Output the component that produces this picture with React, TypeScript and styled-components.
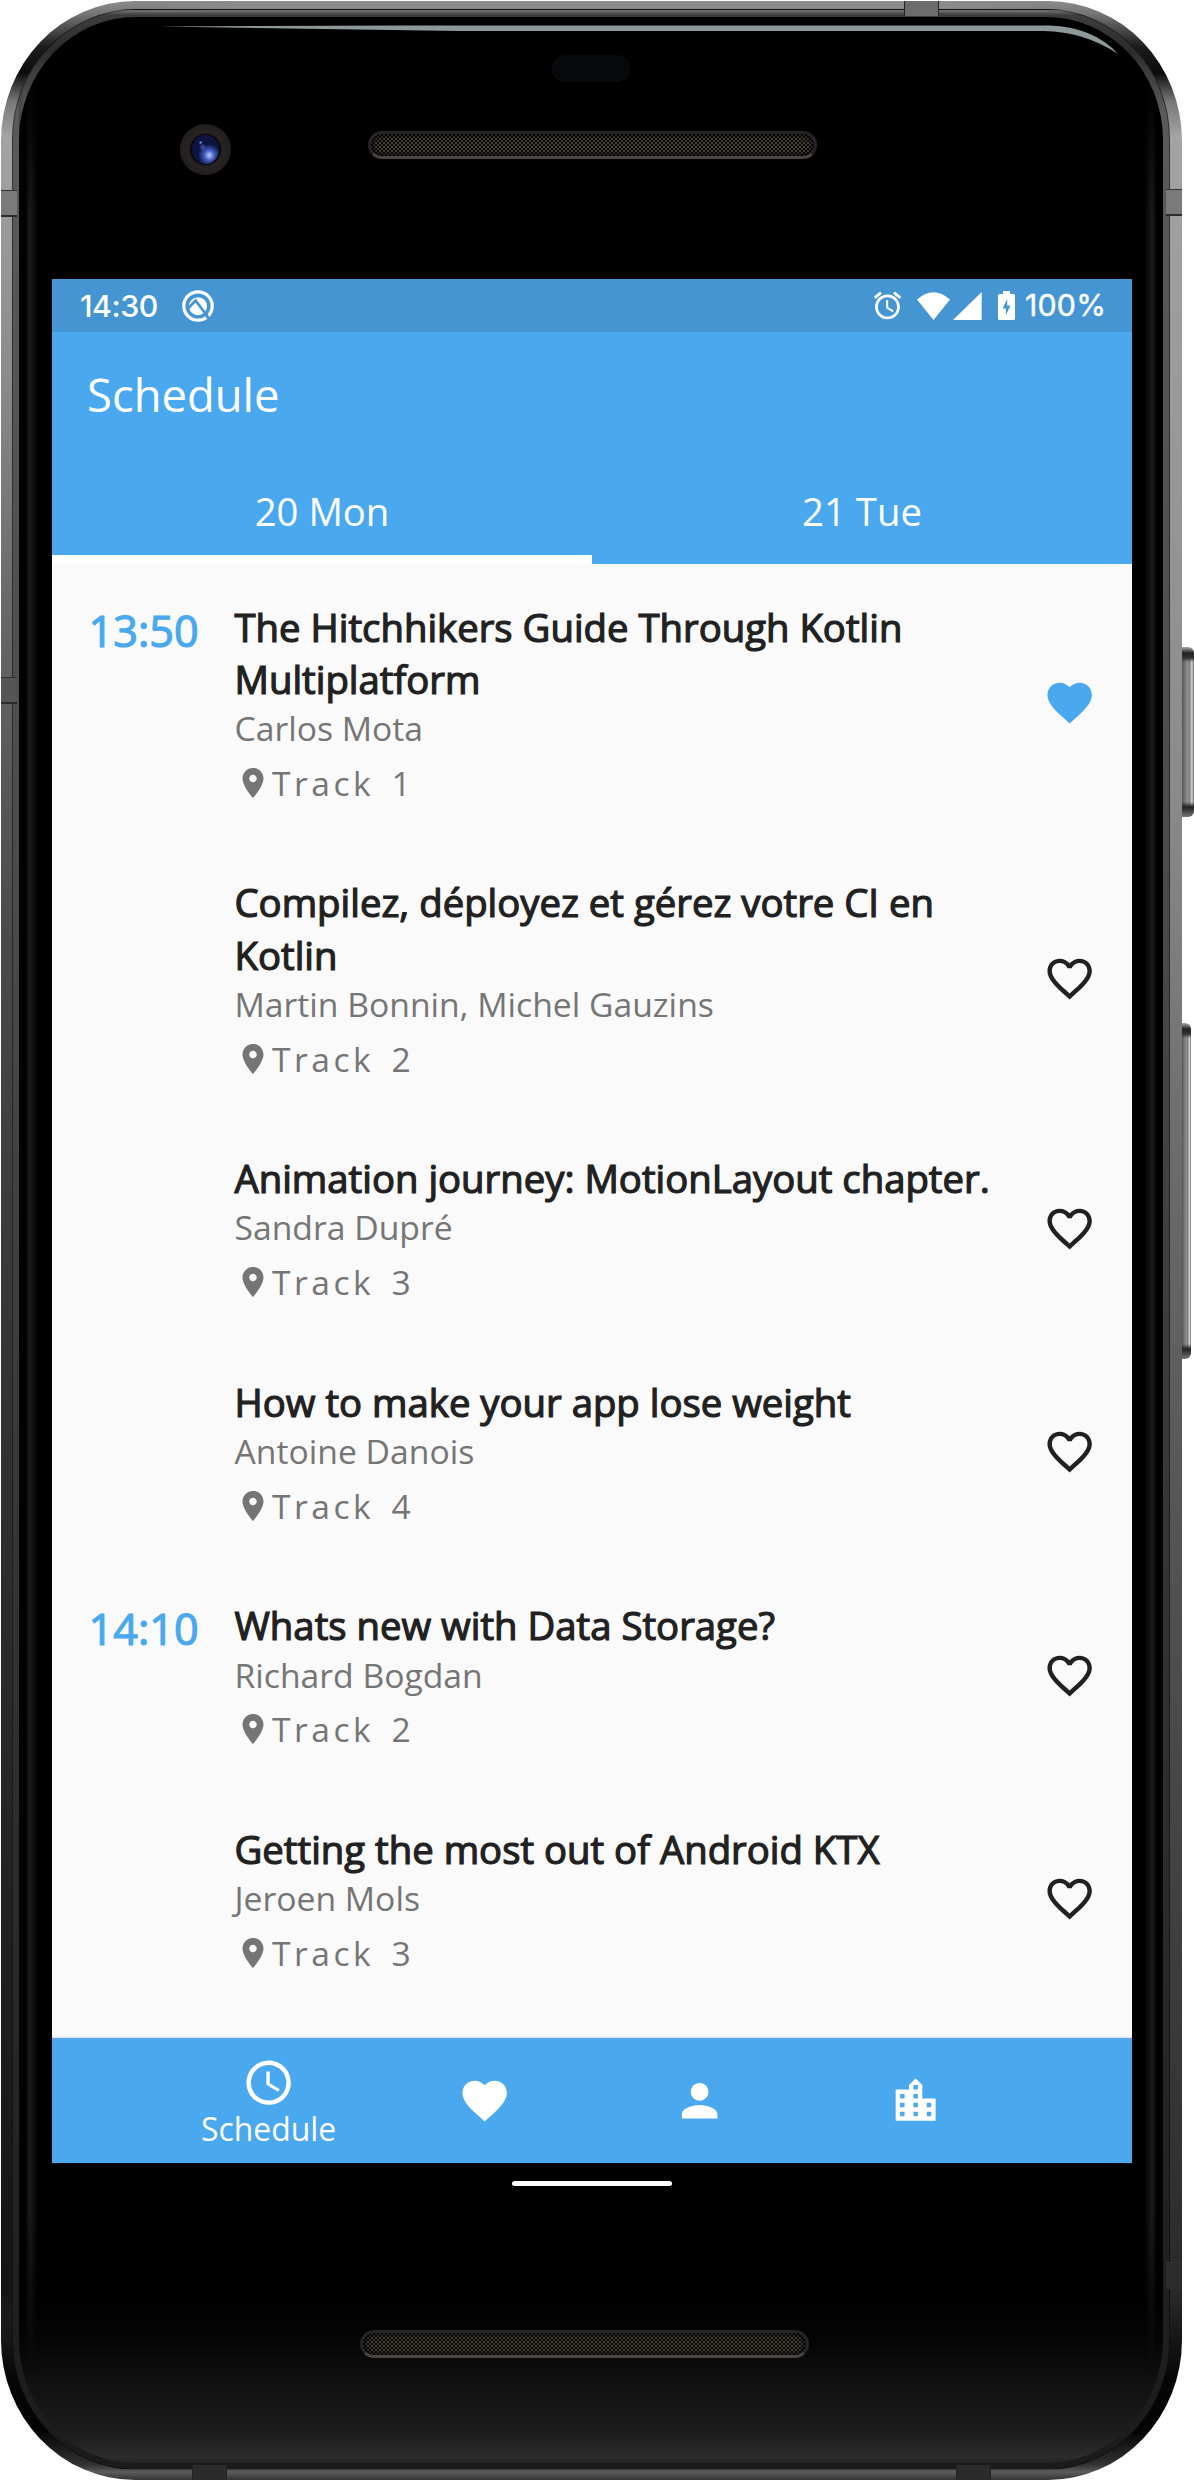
import React from 'react';
import styled, { createGlobalStyle, css } from 'styled-components';

const BLUE = '#49a8ee';
const BLUE_DARK = '#4495d2';
const INK = '#212121';
const MUTED = '#757575';

const GlobalStyle = createGlobalStyle`
  *, *::before, *::after { box-sizing: border-box; }
  body {
    margin: 0;
    background: #fff;
    font-family: "Open Sans", "Noto Sans", sans-serif;
  }
  svg { display: block; flex: none; }
`;

/* ---------- device ---------- */

const Device = styled.div`
  position: relative;
  display: flex;
  width: 1194px;
  height: 2480px;
  padding-left: 1px;
  overflow: hidden;
`;

const Shell = styled.div`
  position: relative;
  width: 1181px;
  height: 2479px;
  margin-top: 1px;
  padding: 8px 12px 10px 11px;
  border-radius: 134px / 140px;
  background:
    linear-gradient(to right, transparent 140px, #8b8b8b 230px, #8b8b8b 950px, transparent 1060px) top / 100% 16px no-repeat,
    linear-gradient(#a3a3a3, #8a8a8a 240px, #666 480px, #4a4a4a 800px, #353535 1200px, #1f1f1f 1840px, #141414 2150px, transparent) 0 140px / 13px 2200px no-repeat,
    linear-gradient(
      #8b8b8b 0,
      #777 12px,
      #1c1c1c 46px,
      #0c0c0c 72px,
      #777 100px,
      #a3a3a3 135px,
      #999 420px,
      #8a8a8a 800px,
      #6c6c6c 1150px,
      #565656 1500px,
      #3c3c3c 1980px,
      #2a2a2a 2290px,
      #050505 2380px,
      #040404 2430px,
      #333 2464px,
      #5c5c5c 2471px,
      #333 2479px
    );
`;

const InnerRim = styled.div`
  height: 100%;
  padding: 7px 6px 6px;
  border-radius: 124px / 130px;
  border: 1px solid rgba(0, 0, 0, 0.45);
  background: linear-gradient(
    #777 0,
    #3d3d3d 5px,
    #2c2c2c 40px,
    #5a5a5a 100px,
    #4a4a4a 900px,
    #333 1600px,
    #222 2200px,
    #1b1b1b 100%
  );
`;

const Glass = styled.div`
  position: relative;
  display: flex;
  flex-direction: column;
  height: 100%;
  padding: 0 33px;
  border-radius: 117px / 123px;
  background: linear-gradient(#000 2270px, #050505 2325px, #121212 2370px, #1c1c1c 2415px, #2c2c2c 2440px, #242424 100%);

  &::before {
    content: '';
    position: absolute;
    inset: 60px 0 90px;
    background: linear-gradient(
      to right,
      #050505,
      transparent 6px,
      #1b1b1b 11px,
      transparent 19px,
      transparent calc(100% - 19px),
      #1b1b1b calc(100% - 11px),
      transparent calc(100% - 6px)
    );
    mask-image: linear-gradient(transparent, #000 140px, #000 calc(100% - 160px), transparent);
  }
`;

const Glare = styled.svg`
  position: absolute;
  left: 158px;
  top: 23px;
`;

const Seam = styled.span<{ $edge: 'left' | 'right' | 'top' | 'bottom'; $at: number; $tone: string }>`
  position: absolute;
  background: ${(p) => p.$tone};
  ${(p) =>
    p.$edge === 'left' || p.$edge === 'right'
      ? css`
          ${p.$edge}: 0;
          top: ${p.$at}px;
          width: 16px;
          height: 27px;
          border-top: 1px solid #333;
          border-bottom: 2px solid #2c2c2c;
        `
      : css`
          ${p.$edge}: 0;
          left: ${p.$at}px;
          width: 35px;
          height: 15px;
          border-left: 1px solid #222;
          border-right: 1px solid #222;
        `}
`;

const SideKeys = styled.div`
  width: 12px;
  padding-top: 647px;
`;

const SideKey = styled.div<{ $height: number; $width: number; $gap?: number }>`
  width: ${(p) => p.$width}px;
  height: ${(p) => p.$height}px;
  margin-top: ${(p) => p.$gap ?? 0}px;
  border-radius: 0 6px 6px 0;
  background:
    linear-gradient(#aaa 0, #222 6px, #333 11px, transparent 15px, transparent calc(100% - 15px), #222 calc(100% - 10px), #777 100%),
    linear-gradient(to right, #555, #8e8e8e 45%, #808080 65%, #d8d8d8 82%, #6a6a6a);
`;

const Forehead = styled.div`
  flex: none;
  height: 262px;
  padding-top: 38px;
`;

const Sensor = styled.div`
  width: 78px;
  height: 27px;
  margin: 0 0 0 500px;
  border-radius: 13px;
  background: #08090d;
`;

const FrontRow = styled.div`
  display: flex;
  align-items: flex-start;
  padding: 42px 0 0 128px;
`;

const Camera = styled.div`
  display: grid;
  place-items: center;
  width: 51px;
  height: 51px;
  border-radius: 50%;
  background: radial-gradient(circle closest-side, #0b0909 58%, #282424 66%, #221e1e 100%);
`;

const Lens = styled.div`
  width: 27px;
  height: 29px;
  border-radius: 50%;
  background:
    radial-gradient(circle at 32% 26%, #8fa6e8 0, transparent 7%),
    radial-gradient(circle at 40% 42%, #3f5cc0 0, transparent 16%),
    radial-gradient(circle at 64% 70%, #b9cdfb 0, #3f58bd 20%, transparent 42%),
    #0c1540;
`;

const Speaker = styled.div<{ $left: number; $top: number }>`
  flex: none;
  width: 449px;
  height: 28px;
  margin: ${(p) => p.$top}px 0 0 ${(p) => p.$left}px;
  border: 3px solid #242424;
  border-bottom-color: #4a4541;
  border-radius: 14px;
  background:
    radial-gradient(circle at 1px 1px, #4a4339 0.9px, transparent 1.5px) 0 0 / 4px 4px,
    radial-gradient(circle at 1px 1px, #3d372f 0.9px, transparent 1.5px) 2px 2px / 4px 4px,
    #090807;
  box-shadow: inset 0 0 4px 1px #000;
`;

/* ---------- app screen ---------- */

const Screen = styled.main`
  display: flex;
  flex: none;
  flex-direction: column;
  width: 1080px;
  height: 1920px;
  background: #fafafa;
`;

const StatusBar = styled.div`
  display: flex;
  align-items: center;
  height: 53px;
  padding: 0 27px 0 28px;
  background: ${BLUE_DARK};
  color: #fff;
  font: 500 30.3px/53px "Inter", "Roboto", sans-serif;
`;

const Clock = styled.span`
  width: 102px;
  padding-top: 1px;
  letter-spacing: -0.5px;
`;

const StatusIcons = styled.div`
  display: flex;
  align-items: center;
  margin-left: auto;
`;

const AlarmSlot = styled.div`
  margin-right: 13.5px;
`;

const WifiSlot = styled.div`
  margin-right: 3px;
`;

const SignalSlot = styled.div`
  margin-right: 16px;
`;

const BatteryLevel = styled.span`
  width: 80px;
  margin-left: 10px;
  font-weight: 400;
  letter-spacing: 0.2px;
  -webkit-text-stroke: 0.4px #fff;
`;

const AppBar = styled.header`
  height: 232px;
  display: flex;
  flex-direction: column;
  justify-content: space-between;
  background: ${BLUE};
  color: #fff;
`;

const PageTitle = styled.h1`
  margin: 0;
  padding: 31px 0 0 35px;
  font-size: 45.4px;
  font-weight: 400;
  line-height: 62px;
`;

const Tabs = styled.div`
  display: flex;
`;

const Tab = styled.div<{ $active?: boolean }>`
  flex: 1;
  height: 102px;
  padding-top: 23px;
  border-bottom: 9px solid ${(p) => (p.$active ? '#fff' : 'transparent')};
  font-size: 38.3px;
  line-height: 52px;
  text-align: center;
`;

const Sessions = styled.section`
  flex: 1;
  overflow: hidden;
`;

const Session = styled.article`
  display: grid;
  grid-template-columns: 146px 1fr 53px;
  padding: 36.5px 36px 0 36.5px;
`;

const heavier = css`
  -webkit-text-stroke: 1.2px currentColor;
`;

const Time = styled.div`
  ${heavier}
  color: ${BLUE};
  font-size: 43.2px;
  line-height: 59px;
`;

const Details = styled.div`
  padding-right: 12px;
`;

const Title = styled.h2`
  ${heavier}
  margin: 0;
  color: ${INK};
  font-size: 38.3px;
  font-weight: 400;
  line-height: 52.3px;
`;

const Speakers = styled.div`
  margin-top: 0.8px;
  color: ${MUTED};
  font-size: 33.7px;
  line-height: 45.8px;
`;

const Room = styled.div`
  display: flex;
  align-items: center;
  gap: 1.5px;
  height: 36px;
  margin: 13px 0 39.2px;
  color: ${MUTED};
  font-size: 33.6px;
  line-height: 36px;
  letter-spacing: 3.5px;
  word-spacing: 5.2px;
`;

const Favourite = styled.div<{ $on?: boolean }>`
  align-self: center;
  margin-top: -35px;
  color: ${(p) => (p.$on ? BLUE : INK)};
`;

const BottomBar = styled.nav`
  display: flex;
  justify-content: center;
  height: 125px;
  background: ${BLUE};
  box-shadow: 0 -1px 2px rgba(0, 0, 0, 0.12);
  color: #fff;
`;

const BottomItem = styled.div<{ $active?: boolean }>`
  display: flex;
  flex-direction: column;
  align-items: center;
  justify-content: center;
  width: 215.6px;
  padding-top: ${(p) => (p.$active ? 5 : 0)}px;
`;

const BottomLabel = styled.span`
  margin-top: -1.7px;
  font-size: 31.9px;
  line-height: 43px;
`;

const GestureArea = styled.div`
  display: flex;
  justify-content: center;
  height: 36px;
  padding-top: 18px;
  background: #000;
`;

const GesturePill = styled.div`
  width: 160px;
  height: 5px;
  border-radius: 3px;
  background: #fff;
`;

/* ---------- icons ---------- */

const PATHS = {
  heart:
    'M12 21.35l-1.45-1.32C5.4 15.36 2 12.28 2 8.5 2 5.42 4.42 3 7.5 3c1.74 0 3.41.81 4.5 2.09C13.09 3.81 14.76 3 16.5 3 19.58 3 22 5.42 22 8.5c0 3.78-3.4 6.86-8.55 11.54L12 21.35z',
  heartOutline:
    'M16.5 3c-1.74 0-3.41.81-4.5 2.09C10.91 3.81 9.24 3 7.5 3 4.42 3 2 5.42 2 8.5c0 3.78 3.4 6.86 8.55 11.54L12 21.35l1.45-1.32C18.6 15.36 22 12.28 22 8.5 22 5.42 19.58 3 16.5 3zm-4.4 15.55l-.1.1-.1-.1C7.14 14.24 4 11.39 4 8.5 4 6.5 5.5 5 7.5 5c1.54 0 3.04.99 3.57 2.36h1.87C13.46 5.99 14.96 5 16.5 5c2 0 3.5 1.5 3.5 3.5 0 2.89-3.14 5.74-7.9 10.05z',
  pin: 'M12 2C8.13 2 5 5.13 5 9c0 5.25 7 13 7 13s7-7.75 7-13c0-3.87-3.13-7-7-7zm0 9.5c-1.38 0-2.5-1.12-2.5-2.5s1.12-2.5 2.5-2.5 2.5 1.12 2.5 2.5-1.12 2.5-2.5 2.5z',
  clock:
    'M11.99 2C6.47 2 2 6.48 2 12s4.47 10 9.99 10C17.52 22 22 17.52 22 12S17.52 2 11.99 2zM12 20c-4.42 0-8-3.58-8-8s3.58-8 8-8 8 3.58 8 8-3.58 8-8 8zm.5-13H11v6l5.25 3.15.75-1.23-4.5-2.67z',
  person:
    'M12 12c2.21 0 4-1.79 4-4s-1.79-4-4-4-4 1.79-4 4 1.79 4 4 4zm0 2c-2.67 0-8 1.34-8 4v2h16v-2c0-2.66-5.33-4-8-4z',
  city: 'M15 11V5l-3-3-3 3v2H3v14h18V11h-6zm-8 8H5v-2h2v2zm0-4H5v-2h2v2zm0-4H5V9h2v2zm6 8h-2v-2h2v2zm0-4h-2v-2h2v2zm0-4h-2V9h2v2zm0-4h-2V5h2v2zm6 12h-2v-2h2v2zm0-4h-2v-2h2v2z',
  alarm:
    'M22 5.72l-4.6-3.86-1.29 1.53 4.6 3.86L22 5.72zM7.88 3.39L6.6 1.86 2 5.71l1.29 1.53 4.59-3.85zM12.5 8H11v6l4.75 2.85.75-1.23-4-2.37V8zM12 4c-4.97 0-9 4.03-9 9s4.02 9 9 9c4.97 0 9-4.03 9-9s-4.03-9-9-9zm0 16c-3.87 0-7-3.13-7-7s3.13-7 7-7 7 3.13 7 7-3.13 7-7 7z',
};

const Icon = ({ name, size }: { name: keyof typeof PATHS; size: number }) => (
  <svg width={size} height={size} viewBox="0 0 24 24" fill="currentColor">
    <path d={PATHS[name]} />
  </svg>
);

const DebugIcon = () => (
  <svg width="32" height="32" viewBox="0 0 32 32" fill="none">
    <circle cx="16" cy="16" r="14.2" stroke="#fff" strokeWidth="3.2" />
    <circle cx="16" cy="16.2" r="9" fill="#fff" />
    <path d="M6 18.6l7.6-8 12.5 16.4" stroke={BLUE_DARK} strokeWidth="2.6" />
    <path d="M24 25.2l3.5 4.6" stroke={BLUE_DARK} strokeWidth="2.6" />
  </svg>
);

const Wifi = () => (
  <svg width="33" height="28" viewBox="0 0 33 28" fill="#fff">
    <path d="M16.5 28L0 7.6Q16.5-7.2 33 7.6z" />
  </svg>
);

const Signal = () => (
  <svg width="29" height="28" viewBox="0 0 29 28" fill="#fff">
    <path d="M28.7 0v28H0z" />
  </svg>
);

const Battery = () => (
  <svg width="17" height="29" viewBox="0 0 17 29">
    <path d="M5 0h7v3h3.5Q17 3 17 4.5v23q0 1.5-1.5 1.5h-14Q0 29 0 27.5v-23Q0 3 1.5 3H5z" fill="#fff" />
    <path d="M9.2 8L4.6 17.4h3.3V24l4.6-9.4H9.2z" fill={BLUE_DARK} />
  </svg>
);

/* ---------- content ---------- */

type Talk = { time?: string; title: string; speakers: string; room: string; favourite?: boolean };

const talks: Talk[] = [
  { time: '13:50', title: 'The Hitchhikers Guide Through Kotlin Multiplatform', speakers: 'Carlos Mota', room: 'Track 1', favourite: true },
  { title: 'Compilez, déployez et gérez votre CI en Kotlin', speakers: 'Martin Bonnin, Michel Gauzins', room: 'Track 2' },
  { title: 'Animation journey: MotionLayout chapter.', speakers: 'Sandra Dupré', room: 'Track 3' },
  { title: 'How to make your app lose weight', speakers: 'Antoine Danois', room: 'Track 4' },
  { time: '14:10', title: 'Whats new with Data Storage?', speakers: 'Richard Bogdan', room: 'Track 2' },
  { title: 'Getting the most out of Android KTX', speakers: 'Jeroen Mols', room: 'Track 3' },
];

const TalkRow = ({ talk }: { talk: Talk }) => (
  <Session>
    <Time>{talk.time}</Time>
    <Details>
      <Title>{talk.title}</Title>
      <Speakers>{talk.speakers}</Speakers>
      <Room>
        <Icon name="pin" size={36} />
        {talk.room}
      </Room>
    </Details>
    <Favourite $on={talk.favourite}>
      <Icon name={talk.favourite ? 'heart' : 'heartOutline'} size={53.3} />
    </Favourite>
  </Session>
);

export default function App() {
  return (
    <>
      <GlobalStyle />
      <Device>
        <Shell>
          <InnerRim>
            <Glass>
              <Forehead>
                <Sensor />
                <FrontRow>
                  <Camera>
                    <Lens />
                  </Camera>
                  <Speaker $left={137} $top={7} />
                </FrontRow>
              </Forehead>
              <Screen>
                <StatusBar>
                  <Clock>14:30</Clock>
                  <DebugIcon />
                  <StatusIcons>
                    <AlarmSlot><Icon name="alarm" size={33} /></AlarmSlot>
                    <WifiSlot><Wifi /></WifiSlot>
                    <SignalSlot><Signal /></SignalSlot>
                    <Battery />
                    <BatteryLevel>100%</BatteryLevel>
                  </StatusIcons>
                </StatusBar>
                <AppBar>
                  <PageTitle>Schedule</PageTitle>
                  <Tabs>
                    <Tab $active>20 Mon</Tab>
                    <Tab>21 Tue</Tab>
                  </Tabs>
                </AppBar>
                <Sessions>
                  {talks.map((talk) => (
                    <TalkRow key={talk.title} talk={talk} />
                  ))}
                </Sessions>
                <BottomBar>
                  <BottomItem $active>
                    <Icon name="clock" size={53.3} />
                    <BottomLabel>Schedule</BottomLabel>
                  </BottomItem>
                  <BottomItem><Icon name="heart" size={53.3} /></BottomItem>
                  <BottomItem><Icon name="person" size={53.3} /></BottomItem>
                  <BottomItem><Icon name="city" size={53.3} /></BottomItem>
                </BottomBar>
                <GestureArea>
                  <GesturePill />
                </GestureArea>
              </Screen>
              <Speaker $left={308} $top={131} />
            </Glass>
          </InnerRim>
          <Glare width="962" height="34" viewBox="0 0 962 34">
            <path d="M0 2.5L240 1.5H890Q935 3 959 30Q925 7.500 885 7H300Z" fill="#8d9898" />
          </Glare>
          <Seam $edge="left" $at={189} $tone="#7a7a7a" />
          <Seam $edge="left" $at={676} $tone="#555" />
          <Seam $edge="right" $at={188} $tone="#7a7a7a" />
          <Seam $edge="right" $at={2261} $tone="#2c2c2c" />
          <Seam $edge="top" $at={903} $tone="#6c6c6c" />
          <Seam $edge="bottom" $at={191} $tone="#2b2b2b" />
          <Seam $edge="bottom" $at={955} $tone="#2b2b2b" />
        </Shell>
        <SideKeys>
          <SideKey $width={12} $height={170} />
          <SideKey $width={9} $height={336} $gap={206} />
        </SideKeys>
      </Device>
    </>
  );
}
